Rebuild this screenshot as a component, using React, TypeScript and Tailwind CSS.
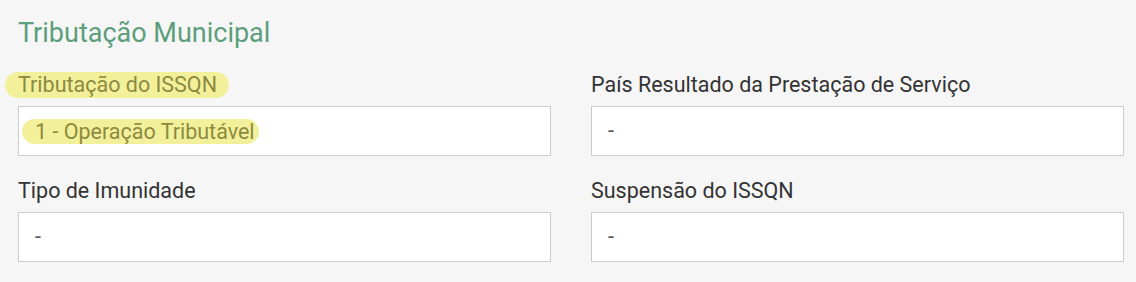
import React from "react";

const font = { fontFamily: "Roboto, 'Noto Sans', sans-serif" };

function Field({ label, value, hl }: { label: string; value: string; hl?: boolean }) {
  return (
    <div className="flex flex-col">
      <div className="h-[26px] flex items-center text-[21.5px] leading-[26px] text-[#333]">
        {hl ? (
          <span className="-ml-[13px] pl-[13px] pr-[12px] rounded-full bg-[#f3f09b] text-[#8d8a3f]">{label}</span>
        ) : (
          label
        )}
      </div>
      <div className="mt-[8px] h-[50px] border border-[#cccccc] bg-white flex items-center pl-[16px] text-[21.5px] text-[#555]">
        {hl ? (
          <span className="-ml-[13px] pl-[13px] pr-[4px] rounded-full bg-[#f3f09b] text-[#8d8a3f] leading-[25px]">{value}</span>
        ) : (
          value
        )}
      </div>
    </div>
  );
}

export default function App() {
  return (
    <div className="w-[1136px] h-[282px] bg-[#f6f6f6] pl-[18px] pr-[12px] pt-[17px]" style={font}>
      <div className="text-[27px] leading-[32px] text-[#5c9e7c]">Tributação Municipal</div>
      <div className="mt-[23px] grid grid-cols-2 gap-x-[40px] gap-y-[22px]">
        <Field label="Tributação do ISSQN" value="1 - Operação Tributável" hl />
        <Field label="País Resultado da Prestação de Serviço" value="-" />
        <Field label="Tipo de Imunidade" value="-" />
        <Field label="Suspensão do ISSQN" value="-" />
      </div>
    </div>
  );
}
